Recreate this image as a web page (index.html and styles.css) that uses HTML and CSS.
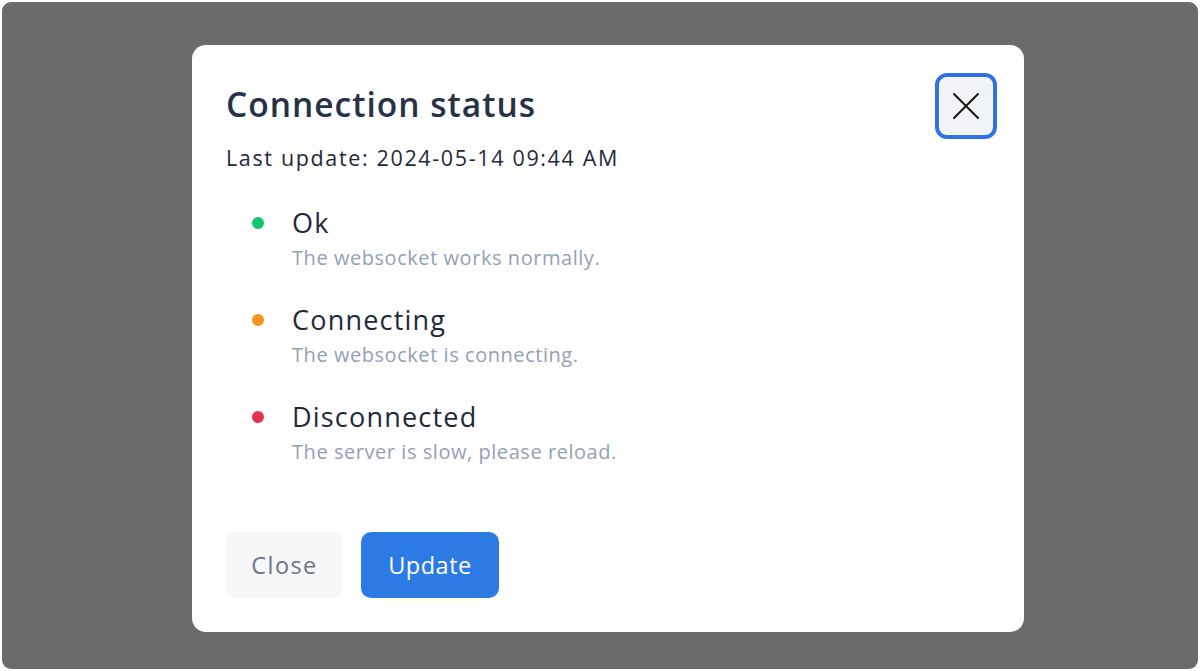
FILE: index.html
```html
<!DOCTYPE html>
<html lang="en">
<head>
<meta charset="utf-8">
<title>Connection status</title>
<link rel="stylesheet" href="styles.css">
</head>
<body>
<div class="overlay">
  <div class="modal" role="dialog" aria-labelledby="dlg-title">
    <div class="modal-header">
      <h2 class="modal-title" id="dlg-title">Connection status</h2>
      <button class="icon-close" aria-label="Close">
        <svg width="26" height="26" viewBox="0 0 26 26" fill="none" stroke="#111" stroke-width="1.9" stroke-linecap="round">
          <path d="M1 1 L25 25 M25 1 L1 25"/>
        </svg>
      </button>
    </div>
    <p class="last-update">Last update: 2024-05-14 09:44 AM</p>
    <ul class="status-list">
      <li class="status-item">
        <span class="dot dot-ok"></span>
        <div class="status-text">
          <div class="status-name">Ok</div>
          <div class="status-desc">The websocket works normally.</div>
        </div>
      </li>
      <li class="status-item">
        <span class="dot dot-connecting"></span>
        <div class="status-text">
          <div class="status-name">Connecting</div>
          <div class="status-desc">The websocket is connecting.</div>
        </div>
      </li>
      <li class="status-item">
        <span class="dot dot-disconnected"></span>
        <div class="status-text">
          <div class="status-name">Disconnected</div>
          <div class="status-desc">The server is slow, please reload.</div>
        </div>
      </li>
    </ul>
    <div class="modal-footer">
      <button class="btn btn-secondary">Close</button>
      <button class="btn btn-primary">Update</button>
    </div>
  </div>
</div>
</body>
</html>
```

FILE: styles.css
```css
* { box-sizing: border-box; }

html, body {
  margin: 0;
  padding: 0;
  background: #ffffff;
}

body {
  font-family: "Open Sans", "Noto Sans", sans-serif;
  color: #1e293b;
}

.overlay {
  margin: 2px;
  height: 667px;
  background: #6b6b6b;
  border-radius: 9px;
  padding-top: 43px;
  padding-left: 190px;
}

.modal {
  width: 832px;
  height: 587px;
  background: #ffffff;
  border-radius: 14px;
  padding: 33px 32px 34px 34px;
  display: flex;
  flex-direction: column;
}

.modal-header {
  display: flex;
  align-items: center;
  justify-content: space-between;
}

.modal-title {
  margin: 0 0 4px;
  font-size: 33.5px;
  line-height: 40px;
  font-weight: 600;
  letter-spacing: 1px;
  color: #253247;
}

.icon-close {
  width: 52px;
  height: 56px;
  border: none;
  border-radius: 7px;
  background: #f2f3f6;
  outline: 4px solid #2f72e8;
  outline-offset: 1px;
  display: flex;
  align-items: center;
  justify-content: center;
  padding: 0;
  cursor: pointer;
}

.last-update {
  margin: 9px 0 0;
  font-size: 21.5px;
  line-height: 30px;
  letter-spacing: 1.65px;
  color: #1e293b;
}

.status-list {
  list-style: none;
  margin: 32px 0 0;
  padding: 0 0 0 26px;
  display: flex;
  flex-direction: column;
  gap: 27px;
}

.status-item {
  display: flex;
  align-items: flex-start;
  gap: 28px;
}

.dot {
  width: 12px;
  height: 12px;
  border-radius: 50%;
  margin-top: 12px;
  flex: none;
}

.dot-ok { background: #12c670; }
.dot-connecting { background: #f7941d; }
.dot-disconnected { background: #e2334f; }

.status-name {
  font-size: 27px;
  line-height: 36px;
  letter-spacing: 1.2px;
  color: #1e293b;
}

.status-desc {
  font-size: 20px;
  line-height: 34px;
  letter-spacing: 0.55px;
  color: #94a0b4;
}

.modal-footer {
  margin-top: auto;
  display: flex;
  gap: 18px;
}

.btn {
  height: 66px;
  border: none;
  border-radius: 10px;
  font-family: inherit;
  font-size: 23.5px;
  padding: 0;
  cursor: pointer;
}

.btn-secondary {
  background: #f6f7f9;
  color: #6b7587;
  width: 117px;
  letter-spacing: 1.4px;
}

.btn-primary {
  background: #2c7be5;
  color: #ffffff;
  width: 138px;
  letter-spacing: 0.5px;
}
```
